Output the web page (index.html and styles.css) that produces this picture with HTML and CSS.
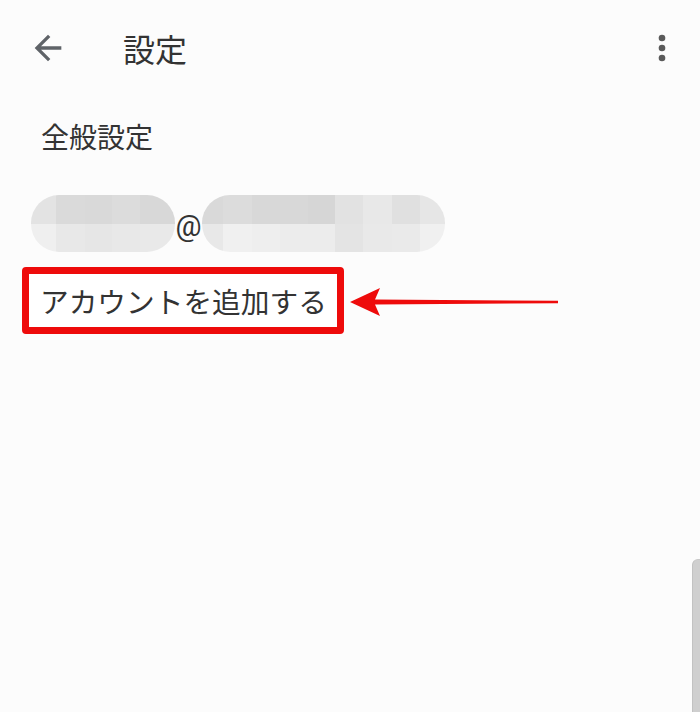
FILE: index.html
```html
<!DOCTYPE html>
<html lang="ja">
<head>
<meta charset="utf-8">
<title>設定</title>
<link rel="stylesheet" href="styles.css">
</head>
<body>
<div class="page">
  <header class="appbar">
    <svg class="icon back" viewBox="0 0 24 24" width="40" height="40"><path d="M20 11H7.83l5.59-5.59L12 4l-8 8 8 8 1.41-1.41L7.83 13H20v-2z"/></svg>
    <h1 class="title">設定</h1>
    <svg class="icon more" viewBox="0 0 24 24" width="40" height="40"><circle cx="12" cy="6" r="2"/><circle cx="12" cy="12" r="2"/><circle cx="12" cy="18" r="2"/></svg>
  </header>
  <div class="section">全般設定</div>
  <div class="email">
    <div class="blob blob1"><div class="row top"></div><div class="row bottom"></div></div>
    <span class="at">@</span>
    <div class="blob blob2"><div class="row top"></div><div class="row bottom"></div></div>
  </div>
  <div class="add-row">
    <div class="add-box">アカウントを追加する</div>
    <svg class="pointer" viewBox="0 0 210 30" width="210" height="30"><path d="M0 15 L30 1 Q27 8 25 12.6 L208 13.8 L208 16.2 L25 17.4 Q27 22 30 29 Z"/></svg>
  </div>
  <div class="scrollbar"></div>
</div>
</body>
</html>
```
FILE: styles.css
```css
html, body {
  margin: 0;
  padding: 0;
  background: #fcfcfc;
}
.page {
  position: relative;
  width: 700px;
  height: 712px;
  overflow: hidden;
  font-family: "Noto Sans CJK JP", "Noto Sans", sans-serif;
  color: #333333;
}
.appbar {
  height: 96px;
  display: flex;
  align-items: center;
  padding: 0 18px 0 28px;
}
.icon {
  flex: none;
  fill: #5f6368;
}
.more {
  fill: #5a5a5a;
  margin-left: auto;
}
.title {
  margin: 0 0 0 55px;
  font-size: 32px;
  font-weight: 400;
  line-height: 32px;
}
.section {
  margin-top: 26px;
  padding-left: 41px;
  font-size: 28px;
  line-height: 28px;
}
.email {
  margin-top: 45px;
  margin-left: 31px;
  display: flex;
  align-items: center;
  height: 57px;
}
.blob {
  height: 57px;
  border-radius: 28px;
  overflow: hidden;
  display: flex;
  flex-direction: column;
}
.row { flex: 1; }
.blob1 { width: 144px; }
.blob2 { width: 243px; }
.blob1 .top {
  background: linear-gradient(to right, #e3e3e3 0 25px, #dadada 25px 54px, #d9d9d9 54px 81px, #dcdcdc 81px 109px, #d8d8d8 109px);
}
.blob1 .bottom {
  background: linear-gradient(to right, #efefef 0 25px, #e8e8e8 25px 54px, #e6e6e6 54px 81px, #e8e8e8 81px 109px, #e9e9e9 109px);
}
.blob2 .top {
  background: linear-gradient(to right, #d9d9d9 0 21px, #dcdcdc 21px 50px, #d8d8d8 50px 78px, #d8d8d8 78px 106px, #d6d6d6 106px 133px, #e2e2e2 133px 161px, #e8e8e8 161px 190px, #e0e0e0 190px 218px, #e6e6e6 218px);
}
.blob2 .bottom {
  background: linear-gradient(to right, #e8e8e8 0 21px, #f0f0f0 21px 50px, #eeeeee 50px 78px, #ececec 78px 106px, #ececec 106px 133px, #e4e4e4 133px 161px, #e9e9e9 161px 190px, #eaeaea 190px 218px, #f0f0f0 218px);
}
.at {
  width: 27px;
  text-align: center;
  font-family: Roboto, "Noto Sans", sans-serif;
  font-size: 29px;
  line-height: 29px;
  padding-top: 6px;
  color: #333333;
}
.add-row {
  margin-top: 15px;
  margin-left: 22px;
  display: flex;
  align-items: center;
}
.add-box {
  box-sizing: border-box;
  width: 322px;
  height: 67px;
  border: 7px solid #ee0b0b;
  border-radius: 4px;
  display: flex;
  align-items: center;
  padding-left: 11px;
  font-size: 28.7px;
  line-height: 29px;
  white-space: nowrap;
  background: #ffffff;
}
.pointer {
  margin-left: 6px;
  margin-top: 2px;
  fill: #ee0b0b;
}
.scrollbar {
  position: absolute;
  right: 0;
  bottom: 0;
  width: 7px;
  height: 152px;
  background: #cfcfcf;
  border-left: 1px solid #c2c2c2;
  border-top: 1px solid #c8c8c8;
  border-top-left-radius: 6px;
}
```
